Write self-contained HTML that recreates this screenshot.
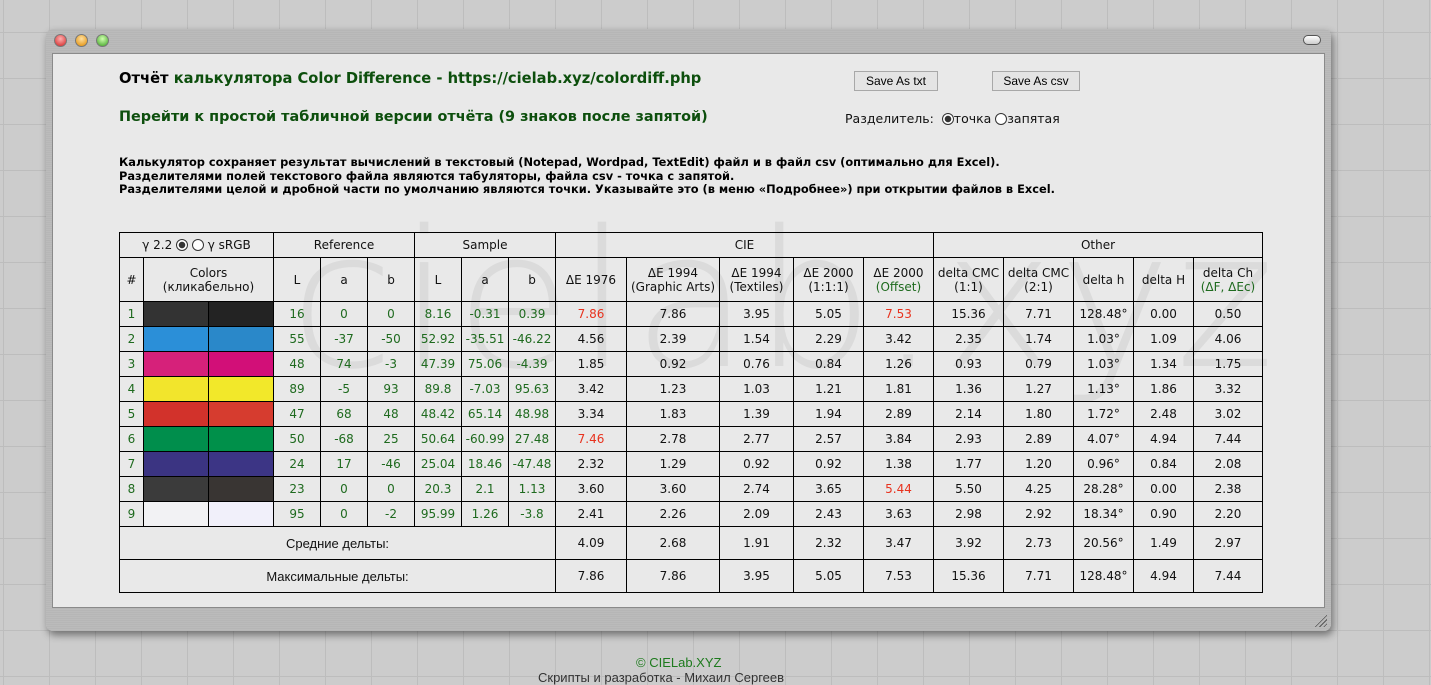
<!DOCTYPE html>
<html><head><meta charset="utf-8"><style>
*{box-sizing:border-box}
body{margin:0;width:1431px;height:676px;overflow:hidden;background-color:#cccccc;
background-image:linear-gradient(to right,#bdbdbd 1px,transparent 1px),linear-gradient(to bottom,#bdbdbd 1px,transparent 1px);
background-size:46px 46px;background-position:3px 32px;font-family:"DejaVu Sans",Verdana,sans-serif;position:relative}
.win{position:absolute;left:46px;top:29px;width:1285px;height:602px;border-radius:7px;
background:repeating-linear-gradient(to bottom,#b4b4b4 0,#c2c2c2 1px,#aaaaaa 2px);box-shadow:2px 4px 8px rgba(0,0,0,.45)}
.content{position:absolute;left:6px;top:24px;width:1273px;height:555px;background:#e9e9e9;border:1px solid #8a8a8a}
.dot{position:absolute;top:5px;width:13px;height:13px;border-radius:50%;border:1px solid #777}
.pill{position:absolute;right:10px;top:6px;width:18px;height:10px;border-radius:6px;border:1px solid #555;background:linear-gradient(#fff,#ccc)}
.t{position:absolute;white-space:nowrap}
.green{color:#0d4f0d}
.btn{position:absolute;height:20px;border:1px solid #a8a8a8;background:#e4e4e4;font:12px "Liberation Sans",sans-serif;text-align:center;line-height:18px}
table{position:absolute;left:119px;top:232px;border-collapse:collapse;font-size:12px;color:#111}
td{border:1px solid #000;text-align:center;padding:0;height:25px}
.g{color:#1e6a1e}
.r{color:#e8321e}
.wm{position:absolute;left:290px;top:190px;font:200 190px "DejaVu Sans",sans-serif;color:rgba(0,0,0,.06);letter-spacing:4px}
.rad{display:inline-block;width:12px;height:12px;border:1px solid #333;border-radius:50%;vertical-align:-2px;background:#fff}
.rad.on{background:radial-gradient(#333 0 3px,#fff 3.5px)}
</style></head><body>
<div class="win">
 <div class="dot" style="left:8px;background:radial-gradient(circle at 50% 35%,#ffb0b0,#d02020)"></div>
 <div class="dot" style="left:29px;background:radial-gradient(circle at 50% 35%,#ffe0a0,#e08a00)"></div>
 <div class="dot" style="left:50px;background:radial-gradient(circle at 50% 35%,#d0ffb0,#3aa020)"></div>
 <div class="pill"></div>
 <div class="content"></div>
 <div style="position:absolute;right:4px;bottom:4px;width:14px;height:14px;background:repeating-linear-gradient(135deg,transparent 0 2px,#555 2px 3px);clip-path:polygon(100% 0,100% 100%,0 100%)"></div>
</div>
<div class="wm">cielab.xyz</div>
<div class="t" style="left:119px;top:70px;font-weight:bold;font-size:14.7px"><span style="color:#000">Отчёт</span> <span class="green">калькулятора Color Difference - https://cielab.xyz/colordiff.php</span></div>
<div class="t green" style="left:119px;top:109px;font-weight:bold;font-size:14.4px">Перейти к простой табличной версии отчёта (9 знаков после запятой)</div>
<div class="btn" style="left:854px;top:71px;width:84px">Save As txt</div>
<div class="btn" style="left:992px;top:71px;width:88px">Save As csv</div>
<div class="t" style="left:845px;top:111px;font-size:12.5px;color:#111">Разделитель:&nbsp; <span class="rad on"></span>точка <span class="rad"></span>запятая</div>
<div class="t" style="left:119px;top:156px;font-weight:bold;font-size:11.4px;line-height:13.5px;color:#000">Калькулятор сохраняет результат вычислений в текстовый (Notepad, Wordpad, TextEdit) файл и в файл csv (оптимально для Excel).<br>Разделителями полей текстового файла являются табуляторы, файла csv - точка с запятой.<br>Разделителями целой и дробной части по умолчанию являются точки. Указывайте это (в меню «Подробнее») при открытии файлов в Excel.</div>
<table>
<colgroup><col style="width:24px"><col style="width:65px"><col style="width:65px"><col style="width:47px"><col style="width:47px"><col style="width:47px"><col style="width:47px"><col style="width:47px"><col style="width:47px"><col style="width:71px"><col style="width:93px"><col style="width:74px"><col style="width:70px"><col style="width:70px"><col style="width:70px"><col style="width:70px"><col style="width:60px"><col style="width:60px"><col style="width:69px"></colgroup>
<tr><td colspan="3">γ 2.2 <span class="rad on"></span> <span class="rad"></span> γ sRGB</td><td colspan="3">Reference</td><td colspan="3">Sample</td><td colspan="5">CIE</td><td colspan="5">Other</td></tr>
<tr style="height:44px"><td>#</td><td colspan="2">Colors<br>(кликабельно)</td><td>L</td><td>a</td><td>b</td><td>L</td><td>a</td><td>b</td><td>ΔE 1976</td><td>ΔE 1994<br>(Graphic Arts)</td><td>ΔE 1994<br>(Textiles)</td><td>ΔE 2000<br>(1:1:1)</td><td>ΔE 2000<br><span class="g">(Offset)</span></td><td>delta CMC<br>(1:1)</td><td>delta CMC<br>(2:1)</td><td>delta h</td><td>delta H</td><td>delta Ch<br><span class="g">(ΔF, ΔEc)</span></td></tr>
<tr><td class="g">1</td><td style="background:#333"></td><td style="background:#232323"></td><td class="g">16</td><td class="g">0</td><td class="g">0</td><td class="g">8.16</td><td class="g">-0.31</td><td class="g">0.39</td><td class="r">7.86</td><td>7.86</td><td>3.95</td><td>5.05</td><td class="r">7.53</td><td>15.36</td><td>7.71</td><td>128.48°</td><td>0.00</td><td>0.50</td></tr>
<tr><td class="g">2</td><td style="background:#2b8fd8"></td><td style="background:#2a88c9"></td><td class="g">55</td><td class="g">-37</td><td class="g">-50</td><td class="g">52.92</td><td class="g">-35.51</td><td class="g">-46.22</td><td>4.56</td><td>2.39</td><td>1.54</td><td>2.29</td><td>3.42</td><td>2.35</td><td>1.74</td><td>1.03°</td><td>1.09</td><td>4.06</td></tr>
<tr><td class="g">3</td><td style="background:#d6217a"></td><td style="background:#d20f78"></td><td class="g">48</td><td class="g">74</td><td class="g">-3</td><td class="g">47.39</td><td class="g">75.06</td><td class="g">-4.39</td><td>1.85</td><td>0.92</td><td>0.76</td><td>0.84</td><td>1.26</td><td>0.93</td><td>0.79</td><td>1.03°</td><td>1.34</td><td>1.75</td></tr>
<tr><td class="g">4</td><td style="background:#f2e52c"></td><td style="background:#f2e82a"></td><td class="g">89</td><td class="g">-5</td><td class="g">93</td><td class="g">89.8</td><td class="g">-7.03</td><td class="g">95.63</td><td>3.42</td><td>1.23</td><td>1.03</td><td>1.21</td><td>1.81</td><td>1.36</td><td>1.27</td><td>1.13°</td><td>1.86</td><td>3.32</td></tr>
<tr><td class="g">5</td><td style="background:#d2322b"></td><td style="background:#d63c2f"></td><td class="g">47</td><td class="g">68</td><td class="g">48</td><td class="g">48.42</td><td class="g">65.14</td><td class="g">48.98</td><td>3.34</td><td>1.83</td><td>1.39</td><td>1.94</td><td>2.89</td><td>2.14</td><td>1.80</td><td>1.72°</td><td>2.48</td><td>3.02</td></tr>
<tr><td class="g">6</td><td style="background:#008e4c"></td><td style="background:#00904a"></td><td class="g">50</td><td class="g">-68</td><td class="g">25</td><td class="g">50.64</td><td class="g">-60.99</td><td class="g">27.48</td><td class="r">7.46</td><td>2.78</td><td>2.77</td><td>2.57</td><td>3.84</td><td>2.93</td><td>2.89</td><td>4.07°</td><td>4.94</td><td>7.44</td></tr>
<tr><td class="g">7</td><td style="background:#3b3482"></td><td style="background:#3c3585"></td><td class="g">24</td><td class="g">17</td><td class="g">-46</td><td class="g">25.04</td><td class="g">18.46</td><td class="g">-47.48</td><td>2.32</td><td>1.29</td><td>0.92</td><td>0.92</td><td>1.38</td><td>1.77</td><td>1.20</td><td>0.96°</td><td>0.84</td><td>2.08</td></tr>
<tr><td class="g">8</td><td style="background:#3b3b3b"></td><td style="background:#393533"></td><td class="g">23</td><td class="g">0</td><td class="g">0</td><td class="g">20.3</td><td class="g">2.1</td><td class="g">1.13</td><td>3.60</td><td>3.60</td><td>2.74</td><td>3.65</td><td class="r">5.44</td><td>5.50</td><td>4.25</td><td>28.28°</td><td>0.00</td><td>2.38</td></tr>
<tr><td class="g">9</td><td style="background:#f2f2f4"></td><td style="background:#f1f0fa"></td><td class="g">95</td><td class="g">0</td><td class="g">-2</td><td class="g">95.99</td><td class="g">1.26</td><td class="g">-3.8</td><td>2.41</td><td>2.26</td><td>2.09</td><td>2.43</td><td>3.63</td><td>2.98</td><td>2.92</td><td>18.34°</td><td>0.90</td><td>2.20</td></tr>
<tr style="height:33px"><td colspan="9" style="font-family:'Liberation Sans',sans-serif;font-size:13px">Средние дельты:</td><td>4.09</td><td>2.68</td><td>1.91</td><td>2.32</td><td>3.47</td><td>3.92</td><td>2.73</td><td>20.56°</td><td>1.49</td><td>2.97</td></tr>
<tr style="height:33px"><td colspan="9" style="font-family:'Liberation Sans',sans-serif;font-size:13px">Максимальные дельты:</td><td>7.86</td><td>7.86</td><td>3.95</td><td>5.05</td><td>7.53</td><td>15.36</td><td>7.71</td><td>128.48°</td><td>4.94</td><td>7.44</td></tr>
</table>
<div class="t" style="left:636px;top:655px;font:13px 'Liberation Sans',sans-serif;color:#1d7a1d">© CIELab.XYZ</div>
<div class="t" style="left:538px;top:670px;font:13px 'Liberation Sans',sans-serif;color:#333">Скрипты и разработка - Михаил Сергеев</div>
</body></html>
